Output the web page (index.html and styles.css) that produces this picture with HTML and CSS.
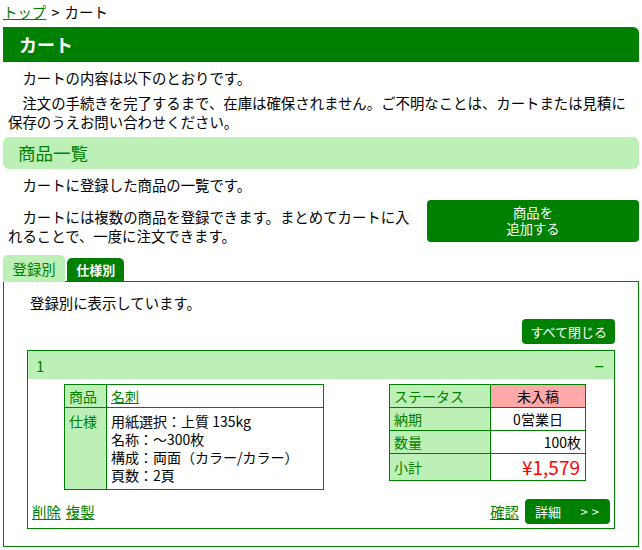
FILE: index.html
```html
<!DOCTYPE html>
<html lang="ja">
<head>
    <meta charset="UTF-8">
    <title>カート</title>
    <link rel="stylesheet" href="styles.css">
</head>
<body>
    <!-- Breadcrumb -->
    <div class="breadcrumb"><a href="#">トップ</a> &gt; カート</div>

    <h1 class="page-title">カート</h1>
    <p class="lead">カートの内容は以下のとおりです。</p>
    <p class="lead">注文の手続きを完了するまで、在庫は確保されません。ご不明なことは、カートまたは見積に保存のうえお問い合わせください。</p>

    <h2 class="section-title">商品一覧</h2>
    <p class="lead">カートに登録した商品の一覧です。</p>
    <div class="add-row">
        <p class="lead add-text">カートには複数の商品を登録できます。まとめてカートに入れることで、一度に注文できます。</p>
        <button class="btn btn-add">商品を<br>追加する</button>
    </div>

    <!-- Tabs -->
    <div class="tabs">
        <span class="tab tab-active">登録別</span>
        <span class="tab">仕様別</span>
    </div>
    <div class="tab-panel">
        <p class="panel-note">登録別に表示しています。</p>
        <div class="panel-tools">
            <button class="btn btn-small">すべて閉じる</button>
        </div>

        <!-- Cart item -->
        <div class="item">
            <div class="item-head">
                <span class="item-no">1</span>
                <span class="item-toggle">−</span>
            </div>
            <div class="item-body">
                <table class="spec">
                    <tr>
                        <th>商品</th>
                        <td><a href="#">名刺</a></td>
                    </tr>
                    <tr class="spec-detail">
                        <th>仕様</th>
                        <td>用紙選択：上質 135kg<br>名称：～300枚<br>構成：両面（カラー/カラー）<br>頁数：2頁</td>
                    </tr>
                </table>
                <table class="summary">
                    <tr>
                        <th>ステータス</th>
                        <td class="status">未入稿</td>
                    </tr>
                    <tr>
                        <th>納期</th>
                        <td class="center">0営業日</td>
                    </tr>
                    <tr>
                        <th>数量</th>
                        <td class="right">100枚</td>
                    </tr>
                    <tr>
                        <th>小計</th>
                        <td class="right price">¥1,579</td>
                    </tr>
                </table>
            </div>
            <div class="item-foot">
                <div class="links">
                    <a href="#">削除</a>
                    <a href="#">複製</a>
                </div>
                <div class="actions">
                    <a href="#">確認</a>
                    <button class="btn btn-detail"><span>詳細</span><span class="arrows">&gt;&gt;</span></button>
                </div>
            </div>
        </div>
    </div>
</body>
</html>
```

FILE: styles.css
```css
/* Base page */
body {
    margin: 0 3px;
    font-family: "Noto Sans CJK JP", "Noto Sans", sans-serif;
    font-size: 14.4px;
    color: #000;
    background: #fff;
}

a {
    color: #008000;
    text-decoration: underline;
}

/* Breadcrumb */
.breadcrumb {
    padding-top: 2px;
    line-height: 20px;
    word-spacing: 2px;
}

/* Page heading */
.page-title {
    margin: 5px 0 0;
    height: 35px;
    line-height: 35px;
    padding-left: 16px;
    font-size: 18px;
    font-weight: bold;
    color: #fff;
    background-color: #008000;
    border-radius: 0 6px 0 0;
}

/* Section heading */
.section-title {
    margin: 6px 0 0;
    height: 32px;
    line-height: 32px;
    padding-left: 15px;
    font-size: 17.5px;
    font-weight: normal;
    color: #008000;
    background-color: #bdf0b7;
    border-radius: 6px;
}

.lead {
    margin: 6px 0 0;
    padding: 0 5px;
    line-height: 19px;
    text-indent: 1em;
}

/* Row with the add button */
.add-row {
    display: flex;
    align-items: flex-start;
    margin-top: 6px;
}

.add-text {
    flex: 1;
    margin: 0;
    padding-top: 7px;
}

.btn {
    font-family: inherit;
    border: none;
    border-radius: 4px;
    background-color: #008000;
    color: #fff;
    cursor: pointer;
}

.btn-add {
    width: 212px;
    height: 42px;
    margin-left: 7px;
    font-size: 13.3px;
    line-height: 16px;
}

/* Tabs */
.tabs {
    display: flex;
    align-items: flex-end;
    gap: 2px;
    margin-top: 10px;
    margin-bottom: -1px;
}

.tab {
    height: 24px;
    line-height: 24px;
    padding: 0 9px;
    font-size: 13px;
    font-weight: bold;
    color: #fff;
    background-color: #008000;
    border-radius: 5px 5px 0 0;
}

.tab-active {
    height: 27px;
    line-height: 27px;
    padding: 0 9.5px;
    font-size: 14.4px;
    font-weight: normal;
    color: #008000;
    background-color: #bdf0b7;
}

.tab-panel {
    border: 1px solid #008000;
    padding: 11px 23px 17px;
}

.panel-note {
    margin: 0;
    padding-left: 3px;
    line-height: 19px;
}

.panel-tools {
    display: flex;
    justify-content: flex-end;
    margin-top: 7px;
}

.btn-small {
    height: 25px;
    padding: 0 8px;
    font-size: 13px;
}

/* Cart item */
.item {
    margin-top: 6px;
    border: 1px solid #008000;
}

.item-head {
    display: flex;
    justify-content: space-between;
    align-items: center;
    height: 28px;
    padding: 0 10px 0 8px;
    background-color: #bdf0b7;
    color: #008000;
    font-size: 15px;
}

.item-toggle {
    font-size: 17px;
}

.item-body {
    display: flex;
    justify-content: space-between;
    align-items: flex-start;
    padding: 5px 28px 0 36px;
}

table {
    border-collapse: collapse;
    font-size: 14px;
    line-height: 18px;
}

th, td {
    border: 1px solid #008000;
    padding: 2px 4px;
}

th {
    font-weight: normal;
    text-align: left;
    color: #008000;
    background-color: #bdf0b7;
}

.spec {
    width: 260px;
}

.spec th {
    width: 33px;
    vertical-align: top;
}

.spec-detail th,
.spec-detail td {
    padding-top: 4px;
    padding-bottom: 5px;
}

.summary {
    width: 197px;
}

.summary th {
    width: 92px;
}

.status {
    text-align: center;
    background-color: #ffa8a8;
}

.center {
    text-align: center;
}

.right {
    text-align: right;
}

.price {
    color: #f00;
    font-size: 19px;
    line-height: 22px;
    padding: 2px 5px 2px 4px;
}

.item-foot {
    display: flex;
    justify-content: space-between;
    align-items: center;
    padding: 9px 4px 4px;
}

.links {
    display: flex;
    gap: 5px;
}

.actions {
    display: flex;
    align-items: center;
    gap: 6px;
}

.btn-detail {
    display: flex;
    justify-content: space-between;
    align-items: center;
    width: 85px;
    height: 25px;
    padding: 0 7px 0 10px;
    font-size: 13px;
}

.arrows {
    letter-spacing: 4px;
}
```
